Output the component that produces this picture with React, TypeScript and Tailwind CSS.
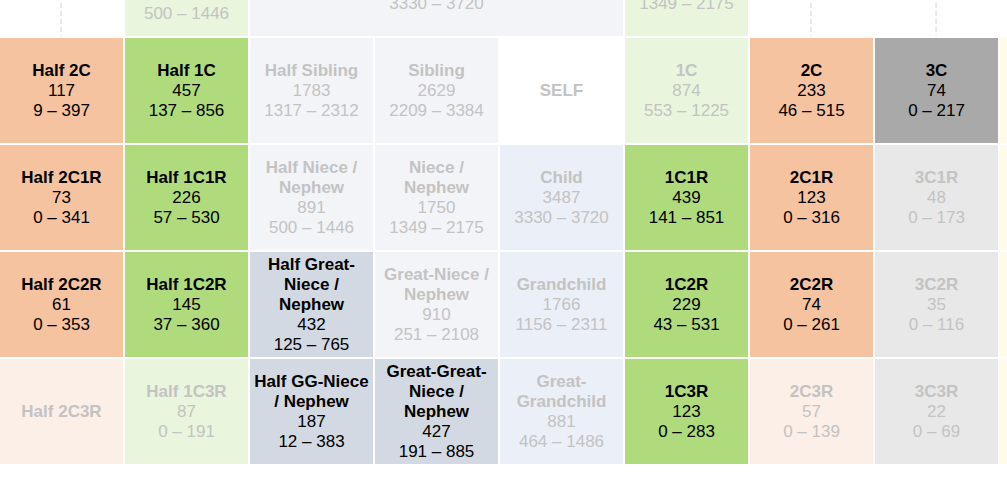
type Tone =
  | "orange"
  | "green"
  | "paleGreen"
  | "paleOrange"
  | "dark"
  | "light"
  | "sibling"
  | "child"
  | "slate"
  | "white"
  | "cream";

interface CellData {
  tone: Tone;
  title?: string;
  count?: number;
  range?: string;
  faded?: boolean;
  span?: 3;
  dashed?: boolean;
}

const toneClass: Record<Tone, string> = {
  orange: "bg-[#f5c3a0]",
  green: "bg-[#afdb7c]",
  paleGreen: "bg-[#e9f5dc]",
  paleOrange: "bg-[#fcefe7]",
  dark: "bg-[#a9a9a9]",
  light: "bg-[#e8e8e8]",
  sibling: "bg-[#f3f4f8]",
  child: "bg-[#ebeff8]",
  slate: "bg-[#d3d9e2]",
  white: "bg-white",
  cream: "bg-[#fffaea]",
};

const rows: CellData[][] = [
  [
    { tone: "white", dashed: true },
    { tone: "paleGreen", title: "Half Aunt / Uncle", count: 891, range: "500 – 1446", faded: true },
    { tone: "sibling", title: "Parent", count: 3487, range: "3330 – 3720", faded: true, span: 3 },
    { tone: "paleGreen", title: "Aunt / Uncle", count: 1750, range: "1349 – 2175", faded: true },
    { tone: "white", dashed: true },
    { tone: "white", dashed: true },
    { tone: "white" },
  ],
  [
    { tone: "orange", title: "Half 2C", count: 117, range: "9 – 397" },
    { tone: "green", title: "Half 1C", count: 457, range: "137 – 856" },
    { tone: "sibling", title: "Half Sibling", count: 1783, range: "1317 – 2312", faded: true },
    { tone: "sibling", title: "Sibling", count: 2629, range: "2209 – 3384", faded: true },
    { tone: "white", title: "SELF", faded: true },
    { tone: "paleGreen", title: "1C", count: 874, range: "553 – 1225", faded: true },
    { tone: "orange", title: "2C", count: 233, range: "46 – 515" },
    { tone: "dark", title: "3C", count: 74, range: "0 – 217" },
    { tone: "cream" },
  ],
  [
    { tone: "orange", title: "Half 2C1R", count: 73, range: "0 – 341" },
    { tone: "green", title: "Half 1C1R", count: 226, range: "57 – 530" },
    { tone: "sibling", title: "Half Niece / Nephew", count: 891, range: "500 – 1446", faded: true },
    { tone: "sibling", title: "Niece / Nephew", count: 1750, range: "1349 – 2175", faded: true },
    { tone: "child", title: "Child", count: 3487, range: "3330 – 3720", faded: true },
    { tone: "green", title: "1C1R", count: 439, range: "141 – 851" },
    { tone: "orange", title: "2C1R", count: 123, range: "0 – 316" },
    { tone: "light", title: "3C1R", count: 48, range: "0 – 173", faded: true },
    { tone: "cream" },
  ],
  [
    { tone: "orange", title: "Half 2C2R", count: 61, range: "0 – 353" },
    { tone: "green", title: "Half 1C2R", count: 145, range: "37 – 360" },
    { tone: "slate", title: "Half Great-Niece / Nephew", count: 432, range: "125 – 765" },
    { tone: "sibling", title: "Great-Niece / Nephew", count: 910, range: "251 – 2108", faded: true },
    { tone: "child", title: "Grandchild", count: 1766, range: "1156 – 2311", faded: true },
    { tone: "green", title: "1C2R", count: 229, range: "43 – 531" },
    { tone: "orange", title: "2C2R", count: 74, range: "0 – 261" },
    { tone: "light", title: "3C2R", count: 35, range: "0 – 116", faded: true },
    { tone: "cream" },
  ],
  [
    { tone: "paleOrange", title: "Half 2C3R", faded: true },
    { tone: "paleGreen", title: "Half 1C3R", count: 87, range: "0 – 191", faded: true },
    { tone: "slate", title: "Half GG-Niece / Nephew", count: 187, range: "12 – 383" },
    { tone: "slate", title: "Great-Great-Niece / Nephew", count: 427, range: "191 – 885" },
    { tone: "child", title: "Great-Grandchild", count: 881, range: "464 – 1486", faded: true },
    { tone: "green", title: "1C3R", count: 123, range: "0 – 283" },
    { tone: "paleOrange", title: "2C3R", count: 57, range: "0 – 139", faded: true },
    { tone: "light", title: "3C3R", count: 22, range: "0 – 69", faded: true },
    { tone: "cream" },
  ],
];

function Cell({ cell }: { cell: CellData }) {
  return (
    <div
      className={`${toneClass[cell.tone]} ${cell.span === 3 ? "col-span-3" : ""} ${
        cell.faded ? "text-[#c3c3c3]" : "text-black"
      } relative flex flex-col items-center justify-center px-[2px] text-center`}
    >
      {cell.dashed && (
        <svg className="absolute inset-y-0 left-[60px] h-full w-[2px]" aria-hidden>
          <line x1="1" y1="0" x2="1" y2="100%" stroke="#d4d4d4" strokeWidth="1" strokeDasharray="5 3" />
        </svg>
      )}
      {cell.title && <div className="font-bold">{cell.title}</div>}
      {cell.count !== undefined && <div>{cell.count}</div>}
      {cell.range && <div>{cell.range}</div>}
    </div>
  );
}

export default function App() {
  return (
    <div className="w-full h-[488px] overflow-hidden bg-white font-['Liberation_Sans',Arial,sans-serif] text-[17px] leading-[normal]">
      <div className="mt-[-69px] grid grid-cols-[repeat(9,123px)] auto-rows-[105px] gap-[2px]">
        {rows.map((row, r) => row.map((cell, c) => <Cell key={`${r}-${c}`} cell={cell} />))}
      </div>
    </div>
  );
}
